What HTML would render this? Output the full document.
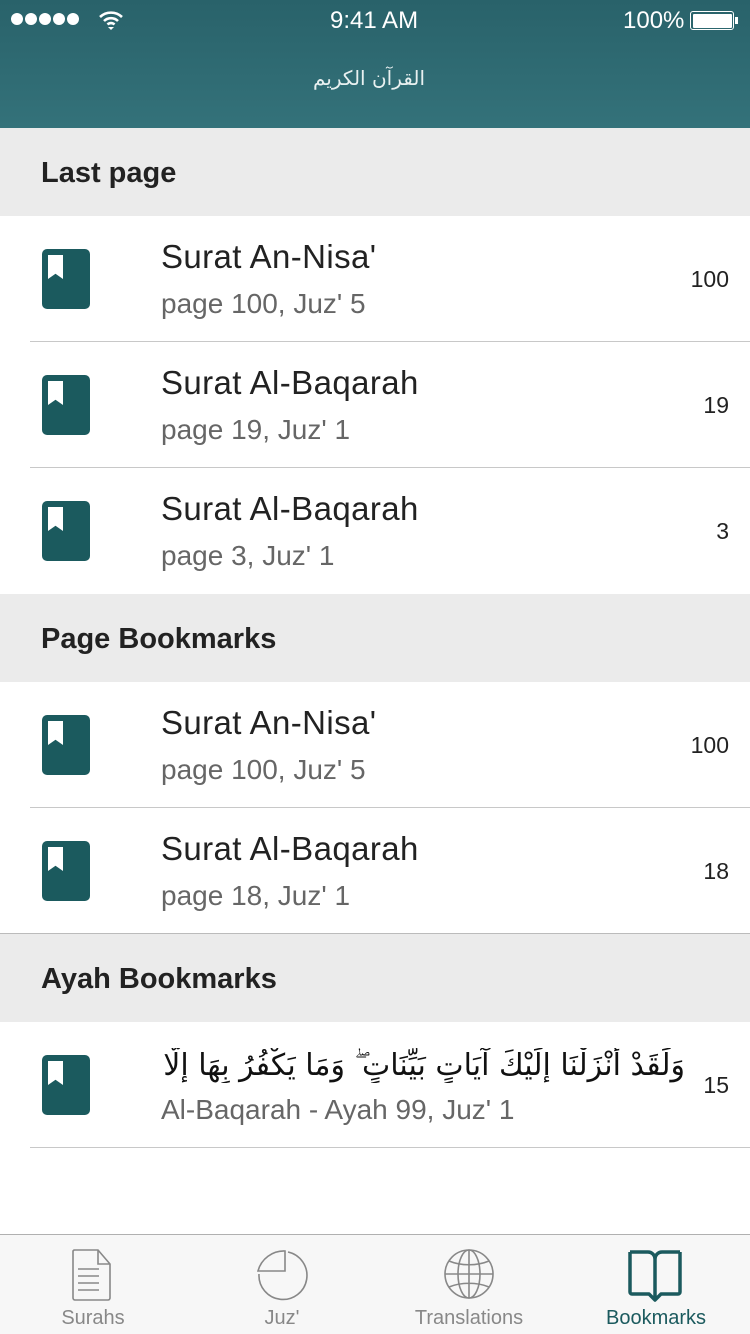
<!DOCTYPE html><html><head><meta charset="utf-8"><style>
*{margin:0;padding:0;box-sizing:border-box}
body{width:750px;height:1334px;position:relative;background:#fff;font-family:"Liberation Sans",sans-serif;overflow:hidden}
.hdr{position:absolute;left:0;top:0;width:750px;height:128px;background:linear-gradient(#29626a,#34727a)}
.sb{position:absolute;color:#fff;font-size:24px;top:7px}
.dot{position:absolute;top:13px;width:12px;height:12px;border-radius:50%;background:#fff}
.sec{position:absolute;left:0;width:750px;height:88px;background:#ebebeb;font-size:29px;font-weight:bold;color:#222;padding-left:41px;line-height:90px}
.row{position:absolute;left:0;width:750px;height:126px}
.ic{position:absolute;left:42px;top:33px;width:48px;height:60px;background:#1b5a5e;border-radius:5px}
.ic:after{content:"";position:absolute;left:6px;top:6px;width:15px;height:24px;background:#fff;clip-path:polygon(0 0,100% 0,100% 100%,50% 78%,0 100%)}
.t{position:absolute;left:161px;top:22px;font-size:33px;letter-spacing:0.4px;color:#222}
.s{position:absolute;left:161px;top:72px;font-size:28px;color:#666}
.n{position:absolute;right:21px;top:50px;font-size:23px;color:#222}
.sep{position:absolute;left:30px;right:0;height:1px;background:#c8c8c8}
.tab{position:absolute;top:1234px;left:0;width:750px;height:100px;background:#f7f7f7;border-top:1px solid #b0b0b0}
.tl{position:absolute;top:1307px;font-size:20px;color:#888;transform:translateX(-50%)}
</style></head><body>
<div class="hdr">
<div class="dot" style="left:11px"></div><div class="dot" style="left:25px"></div><div class="dot" style="left:39px"></div><div class="dot" style="left:53px"></div><div class="dot" style="left:67px"></div>
<svg style="position:absolute;left:98px;top:10px" width="26" height="20" viewBox="0 0 26 20"><path d="M2 7a16 16 0 0 1 22 0M6 11a10 10 0 0 1 14 0M9.5 14.5a5 5 0 0 1 7 0" stroke="#fff" stroke-width="2.6" fill="none"/><path d="M10 17l3 3 3-3z" fill="#fff"/></svg>
<div class="sb" style="left:330px">9:41 AM</div>
<div class="sb" style="left:623px">100%</div>
<div style="position:absolute;left:690px;top:11px;width:44px;height:19px;border:1.5px solid #fff;border-radius:3px;padding:1.5px"><div style="background:#fff;width:100%;height:100%;border-radius:1px"></div></div>
<div style="position:absolute;left:735px;top:17px;width:3px;height:7px;background:#fff"></div>
<div style="position:absolute;left:325px;top:66px;width:100px;text-align:center;color:#e8f0f0;font-size:20px;font-family:'DejaVu Sans',sans-serif;white-space:nowrap;direction:rtl">القرآن الكريم</div>
</div>
<div class="sec" style="top:128px">Last page</div>
<div class="row" style="top:216px"><div class="ic"></div><div class="t">Surat An-Nisa'</div><div class="s">page 100, Juz' 5</div><div class="n">100</div></div>
<div class="sep" style="top:341px"></div>
<div class="row" style="top:342px"><div class="ic"></div><div class="t">Surat Al-Baqarah</div><div class="s">page 19, Juz' 1</div><div class="n">19</div></div>
<div class="sep" style="top:467px"></div>
<div class="row" style="top:468px"><div class="ic"></div><div class="t">Surat Al-Baqarah</div><div class="s">page 3, Juz' 1</div><div class="n">3</div></div>
<div class="sec" style="top:594px">Page Bookmarks</div>
<div class="row" style="top:682px"><div class="ic"></div><div class="t">Surat An-Nisa'</div><div class="s">page 100, Juz' 5</div><div class="n">100</div></div>
<div class="sep" style="top:807px"></div>
<div class="row" style="top:808px"><div class="ic"></div><div class="t">Surat Al-Baqarah</div><div class="s">page 18, Juz' 1</div><div class="n">18</div></div>
<div class="sep" style="top:933px;left:0;background:#bbb"></div>
<div class="sec" style="top:934px">Ayah Bookmarks</div>
<div class="row" style="top:1022px"><div class="ic"></div>
<div style="position:absolute;left:161px;top:26px;width:524px;text-align:right;direction:rtl;font-size:30px;color:#111;font-family:'DejaVu Sans',sans-serif;white-space:nowrap;overflow:hidden">وَلَقَدْ أَنْزَلْنَا إِلَيْكَ آيَاتٍ بَيِّنَاتٍ ۖ وَمَا يَكْفُرُ بِهَا إِلَّا...</div>
<div class="s" style="top:72px">Al-Baqarah - Ayah 99, Juz' 1</div><div class="n">15</div></div>
<div class="sep" style="top:1147px"></div>
<div class="tab"></div>
<svg style="position:absolute;left:70px;top:1248px" width="46" height="54" viewBox="0 0 46 54"><path d="M4 2h24l12 14v34a2 2 0 0 1-2 2H5a2 2 0 0 1-2-2V3z M28 2v14h12" fill="none" stroke="#888" stroke-width="1.6"/><path d="M8 21h21M8 28h21M8 35h21M8 42h21" stroke="#888" stroke-width="1.6"/></svg>
<svg style="position:absolute;left:255px;top:1248px" width="56" height="56" viewBox="0 0 56 56"><path d="M30 3v20H3A27 27 0 0 1 30 3z" fill="none" stroke="#888" stroke-width="1.6"/><path d="M33 4a24 24 0 1 1-29 22" fill="none" stroke="#888" stroke-width="1.6"/></svg>
<svg style="position:absolute;left:443px;top:1248px" width="52" height="52" viewBox="0 0 52 52"><g fill="none" stroke="#888" stroke-width="1.6"><circle cx="26" cy="26" r="24"/><ellipse cx="26" cy="26" rx="11" ry="24"/><path d="M26 2v48M2 26h48M6 13c12 5 28 5 40 0M6 39c12-5 28-5 40 0"/></g></svg>
<svg style="position:absolute;left:626px;top:1248px" width="58" height="58" viewBox="0 0 58 58"><path d="M4 4h18a7 7 0 0 1 7 7v40M54 4H36a7 7 0 0 0-7 7M4 4v40a2 2 0 0 0 2 2h17l6 6 6-6h17a2 2 0 0 0 2-2V4" fill="none" stroke="#1b5a5e" stroke-width="3.5" stroke-linejoin="round"/></svg>
<div class="tl" style="left:93px">Surahs</div>
<div class="tl" style="left:282px">Juz'</div>
<div class="tl" style="left:469px">Translations</div>
<div class="tl" style="left:656px;color:#1b5a5e">Bookmarks</div>
</body></html>
